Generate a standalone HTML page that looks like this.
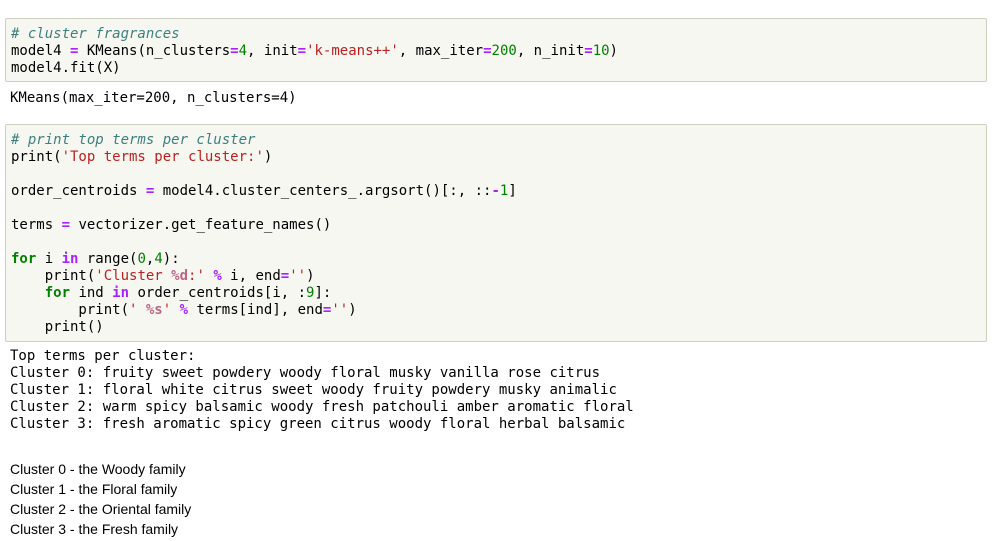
<!DOCTYPE html>
<html><head><style>
body{margin:0;background:#fff;width:1002px;height:541px;overflow:hidden;position:relative}
.m{font-family:"DejaVu Sans Mono","Liberation Mono",monospace;font-size:14px;line-height:17px;white-space:pre;margin:0}
.cell{position:absolute;left:5px;width:982px;background:#f7f7f1;border:1px solid #cfcfc0;border-radius:2px;box-sizing:border-box;padding:0 0 0 5px}
.c{color:#3d7f7f;font-style:italic}.o{color:#aa22ff;font-weight:bold}.n{color:#008000}.s{color:#ba2121}.k{color:#008000;font-weight:bold}.sp{color:#bb6688;font-weight:bold}
.out{position:absolute;left:10px}
.md{position:absolute;left:10px;font-family:"Liberation Sans",Arial,sans-serif;font-size:14px;line-height:20px;color:#000}
</style></head><body>
<div class="cell" style="top:18px;height:64px;padding-top:7px"><pre class="m"><span class="c"># cluster fragrances</span>
model4 <span class="o">=</span> KMeans(n_clusters<span class="o">=</span><span class="n">4</span>, init<span class="o">=</span><span class="s">'k-means++'</span>, max_iter<span class="o">=</span><span class="n">200</span>, n_init<span class="o">=</span><span class="n">10</span>)
model4.fit(X)</pre></div>
<pre class="m out" style="top:90px">KMeans(max_iter=200, n_clusters=4)</pre>
<div class="cell" style="top:124px;height:218px;padding-top:7px"><pre class="m"><span class="c"># print top terms per cluster</span>
print(<span class="s">'Top terms per cluster:'</span>)

order_centroids <span class="o">=</span> model4.cluster_centers_.argsort()[:, ::<span class="o">-</span><span class="n">1</span>]

terms <span class="o">=</span> vectorizer.get_feature_names()

<span class="k">for</span> i <span class="o">in</span> range(<span class="n">0</span>,<span class="n">4</span>):
    print(<span class="s">'Cluster </span><span class="sp">%d</span><span class="s">:'</span> <span class="o">%</span> i, end<span class="o">=</span><span class="s">''</span>)
    <span class="k">for</span> ind <span class="o">in</span> order_centroids[i, :<span class="n">9</span>]:
        print(<span class="s">' </span><span class="sp">%s</span><span class="s">'</span> <span class="o">%</span> terms[ind], end<span class="o">=</span><span class="s">''</span>)
    print()</pre></div>
<pre class="m out" style="top:348px">Top terms per cluster:
Cluster 0: fruity sweet powdery woody floral musky vanilla rose citrus
Cluster 1: floral white citrus sweet woody fruity powdery musky animalic
Cluster 2: warm spicy balsamic woody fresh patchouli amber aromatic floral
Cluster 3: fresh aromatic spicy green citrus woody floral herbal balsamic</pre>
<div class="md" style="top:459px">Cluster 0 - the Woody family<br>Cluster 1 - the Floral family<br>Cluster 2 - the Oriental family<br>Cluster 3 - the Fresh family</div>
</body></html>
